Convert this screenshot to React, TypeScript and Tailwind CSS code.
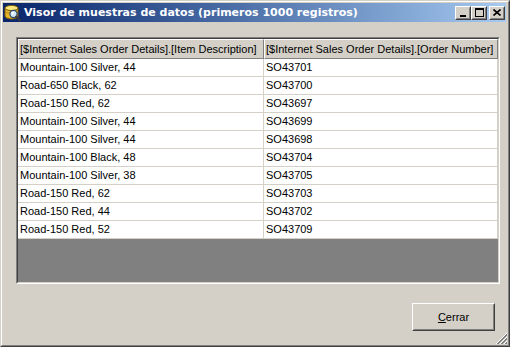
import React from "react";

const rows: [string, string][] = [
  ["Mountain-100 Silver, 44", "SO43701"],
  ["Road-650 Black, 62", "SO43700"],
  ["Road-150 Red, 62", "SO43697"],
  ["Mountain-100 Silver, 44", "SO43699"],
  ["Mountain-100 Silver, 44", "SO43698"],
  ["Mountain-100 Black, 48", "SO43704"],
  ["Mountain-100 Silver, 38", "SO43705"],
  ["Road-150 Red, 62", "SO43703"],
  ["Road-150 Red, 44", "SO43702"],
  ["Road-150 Red, 52", "SO43709"],
];

function AppIcon() {
  return (
    <svg width="17" height="17" viewBox="0 0 17 17" className="shrink-0 block">
      <path d="M1 4 V12 C1 13.8 4.2 15 7.5 15 C10.8 15 14 13.8 14 12 V4 Z" fill="#e6b428" stroke="#7a5a08" strokeWidth="1" />
      <ellipse cx="7.5" cy="4" rx="6.5" ry="2.6" fill="#fbe67a" stroke="#7a5a08" strokeWidth="1" />
      <path d="M1.5 8 C3 9.5 12 9.5 13.5 8" stroke="#b88a18" strokeWidth="1" fill="none" />
      <circle cx="9.5" cy="10" r="3.6" fill="#cfe6f6" stroke="#2c4a6a" strokeWidth="1.2" />
      <circle cx="8.6" cy="9.1" r="1.3" fill="#ffffff" />
      <path d="M12.2 12.7 L16 16.3" stroke="#3a3a3a" strokeWidth="2.2" strokeLinecap="round" />
    </svg>
  );
}

function TitleBtn({ children, ml }: { children: React.ReactNode; ml?: boolean }) {
  return (
    <div className={`w-[16px] h-[14px] bg-[#d4d0c8] border border-white border-r-[#404040] border-b-[#404040] ${ml ? "ml-[2px]" : ""}`}>
      <div className="w-full h-full border border-transparent border-r-[#808080] border-b-[#808080] flex items-center justify-center">
        {children}
      </div>
    </div>
  );
}

export default function App() {
  return (
    <div className="w-[510px] h-[347px] bg-[#d4d0c8] border border-[#d4d0c8] border-r-[#404040] border-b-[#404040] font-['Liberation_Sans',Arial,sans-serif] text-[11px] text-black select-none">
      <div className="w-full h-full border border-white border-r-[#808080] border-b-[#808080] p-px flex flex-col relative">
        {/* Title bar */}
        <div className="h-[19px] flex items-center bg-gradient-to-r from-[#0a246a] to-[#a6caf0] pl-[1px] pr-[1px] mr-[1px]">
          <AppIcon />
          <div className="ml-[3px] text-white font-bold text-[11px] leading-none font-['DejaVu_Sans',sans-serif] whitespace-nowrap">
            Visor de muestras de datos (primeros 1000 registros)
          </div>
          <div className="ml-auto flex items-center">
            <TitleBtn>
              <div className="w-[6px] h-[2px] bg-black mt-[6px] mr-[1px]" />
            </TitleBtn>
            <TitleBtn>
              <div className="w-[9px] h-[9px] border border-black border-t-2" />
            </TitleBtn>
            <TitleBtn ml>
              <svg width="8" height="7" viewBox="0 0 8 7">
                <path d="M0.5 0.5 L7.5 6.5 M7.5 0.5 L0.5 6.5" stroke="black" strokeWidth="1.6" />
              </svg>
            </TitleBtn>
          </div>
        </div>

        {/* Client */}
        <div className="flex-1 flex flex-col">
          <div className="ml-[13px] mt-[15px] w-[484px] h-[247px] border border-[#808080] border-r-white border-b-white">
            <div className="w-full h-full border border-[#404040] border-r-[#d4d0c8] border-b-[#d4d0c8] bg-[#808080] flex flex-col">
              {/* header */}
              <div className="flex h-[20px] bg-[#d4d0c8]">
                <div className="w-[246px] h-full border border-white border-r-[#808080] border-b-[#808080] pl-px flex items-center whitespace-nowrap overflow-hidden">
                  [$Internet Sales Order Details].[Item Description]
                </div>
                <div className="w-[234px] h-full border border-white border-r-[#808080] border-b-[#808080] pl-px flex items-center whitespace-nowrap overflow-hidden">
                  [$Internet Sales Order Details].[Order Number]
                </div>
              </div>
              {rows.map(([a, b], i) => (
                <div key={i} className="flex h-[18px] bg-white">
                  <div className="w-[246px] h-full border-r border-b border-[#d4d0c8] pl-[2px] flex items-center whitespace-nowrap">
                    {a}
                  </div>
                  <div className="w-[234px] h-full border-r border-b border-[#d4d0c8] pl-[2px] flex items-center whitespace-nowrap">
                    {b}
                  </div>
                </div>
              ))}
            </div>
          </div>

          <div className="flex justify-end mt-[19px] mr-[12px]">
            <div className="w-[83px] h-[28px] border border-white border-r-[#404040] border-b-[#404040]">
              <div className="w-full h-full border border-[#d4d0c8] border-r-[#808080] border-b-[#808080] flex items-center justify-center">
                <span>
                  <span className="underline">C</span>errar
                </span>
              </div>
            </div>
          </div>
        </div>

        {/* size grip */}
        <svg className="absolute right-0 bottom-0" width="12" height="12" viewBox="0 0 12 12">
          <path d="M11 1 L1 11 M11 5 L5 11 M11 9 L9 11" stroke="#808080" strokeWidth="1" />
          <path d="M11 2 L2 11 M11 6 L6 11 M11 10 L10 11" stroke="#808080" strokeWidth="1" />
          <path d="M11 0 L0 11 M11 4 L4 11 M11 8 L8 11" stroke="#ffffff" strokeWidth="1" />
        </svg>
      </div>
    </div>
  );
}
